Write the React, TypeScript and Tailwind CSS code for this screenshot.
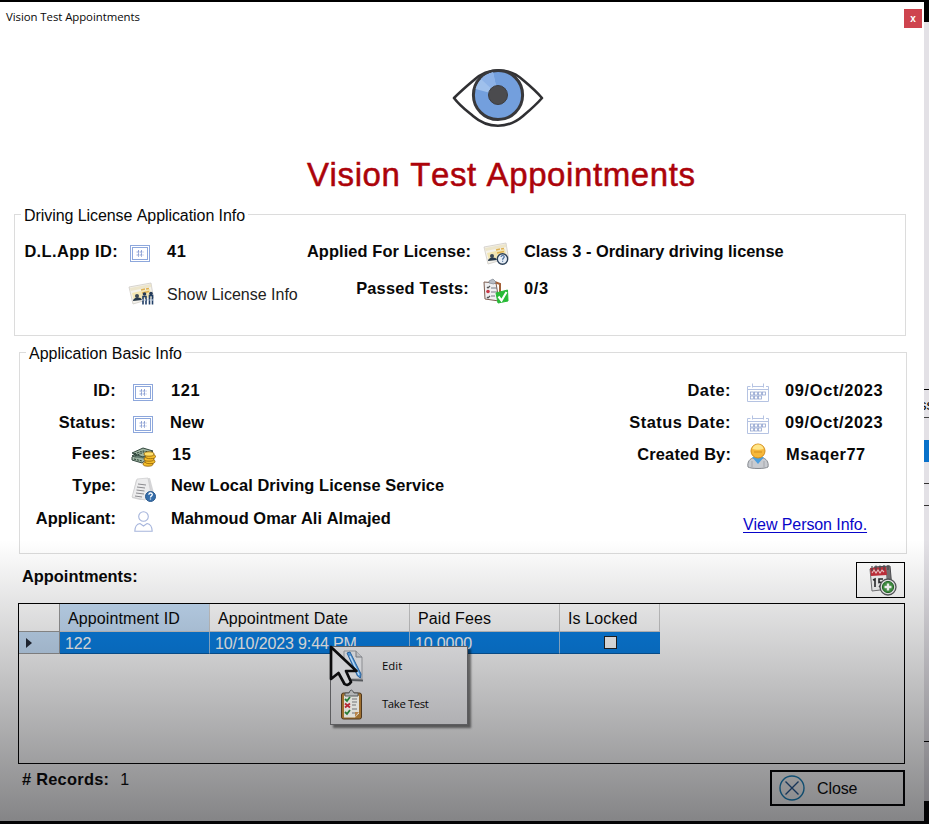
import type { ReactNode } from "react";

const strong = "text-[16.4px] leading-[18px] font-bold";

function EyeIcon() {
  return (
    <svg width="92" height="60" viewBox="0 0 92 60" fill="none">
      <path d="M2 30C10 22 16 17 22 12C36-1 57-1 71 12C77 17 84 23 90 30C84 37 78 42 71 48C56 61 36 61 21 48C15 43 8 38 2 30Z" stroke="#303033" strokeWidth="2.6" strokeLinejoin="round" fill="#fff" />
      <circle cx="46" cy="27" r="24.6" fill="#739fdd" stroke="#38383b" strokeWidth="3" />
      <path d="M46 27L23.5 21A23.3 23.3 0 0 1 41 4.3Z" fill="#9fc0ec" />
      <path d="M46 27L29 11A23.3 23.3 0 0 1 41 4.3Z" fill="#8db2e7" />
      <circle cx="46" cy="27" r="9.5" fill="#4b4b4e" stroke="#3c3c40" />
    </svg>
  );
}

function IdIcon() {
  return (
    <svg width="20" height="17" viewBox="0 0 20 17" fill="none" stroke="#8da7dc">
      <rect x="0.5" y="0.5" width="19" height="16" />
      <rect x="2.5" y="2.5" width="15" height="12" />
      <path d="M8.500 5v7M11.500 5v7M6.500 7h7M6.500 10h7" stroke="#7890cc" strokeWidth=".8" strokeDasharray="2.500 .6" />
    </svg>
  );
}

function LicenseIcon({ badge }: { badge: "people" | "question" }) {
  return (
    <svg width="27" height="24" viewBox="0 0 27 24" fill="none">
      <path d="M1 5L23 1L25.5 16L5 22Z" fill="#f4f2ec" stroke="#cfccc5" strokeWidth=".8" />
      <path d="M2 6L23 2L23.4 5L2.6 9Z" fill="#ece5cb" />
      <path d="M4 11L22 7L23.5 15L6 19Z" fill="#f3e6b4" />
      <path d="M13 8l4-1M18 7l3-.6M14 11l7-1.5" stroke="#dfb04e" strokeWidth="1.5" />
      <circle cx="9" cy="14" r="2" fill="#3d4a58" />
      <path d="M5 19c0-4 8-5 9-1Z" fill="#26384c" />
      {badge === "question" ? (
        <>
          <circle cx="19.5" cy="17" r="5.2" fill="#e6edf5" stroke="#2c4058" strokeWidth="1.4" />
          <path d="M18 15c.3-2 3.3-2 3.2 0c0 1-1.6 1-1.6 2.8m0 1v1" stroke="#486c9b" strokeWidth="1.2" />
        </>
      ) : (
        <>
          <path d="M15 22.5v-8h3v8m3.5 0v-9h3v9" stroke="#203e66" strokeWidth="1.6" />
          <circle cx="16.5" cy="12" r="1.8" fill="#243a58" />
          <circle cx="23" cy="11.5" r="1.8" fill="#243a58" />
          <path d="M14 18h12" stroke="#cfe0f2" strokeDasharray="1.5 1" />
        </>
      )}
    </svg>
  );
}

function TestsIcon() {
  return (
    <svg width="26" height="26" viewBox="0 0 26 26" fill="none">
      <path d="M1 4L13 5L16 23L2 21Z" fill="#efeff1" stroke="#7c5d50" />
      <path d="M9 3L17 6L17 14" stroke="#a36038" strokeWidth="2" />
      <path d="M6 3l4-2 3 3-2 2-5-1Z" fill="#b8bcc4" stroke="#808691" strokeWidth=".7" />
      <path d="M8 10h6M8 14h6M8 18h4" stroke="#777a83" />
      <path d="M4 9l1 1 2-2M4 19l1 1 2-2" stroke="#555" strokeWidth="1.2" />
      <circle cx="5" cy="13.5" r="1.8" fill="#c83a48" />
      <path d="M13 15L24.5 12L25 23L15 25Z" fill="#27ba36" stroke="#27ba36" strokeLinejoin="round" />
      <path d="M15.5 18.5l3 4 5-8.5" stroke="#fff" strokeWidth="2.1" />
    </svg>
  );
}

function MoneyIcon() {
  return (
    <svg width="25" height="20" viewBox="0 0 25 20" fill="none">
      <path d="M1 9L12 2L22 5L11 14Z" fill="#60796c" stroke="#293d33" />
      <path d="M1 6L12 1L22 4L12 10ZM1 10v3l10 3 5-4" fill="#9fb5a3" stroke="#34493f" />
      <path d="M3 7l9-3 6 1M4 9l9-4M3 12l8 2" stroke="#263d31" strokeDasharray="2 1" />
      <g fill="#f4bd29" stroke="#8d5d05" strokeWidth=".8">
        <ellipse cx="17" cy="17" rx="5" ry="2.2" />
        <ellipse cx="19" cy="14.5" rx="5" ry="2.2" />
        <ellipse cx="18" cy="12" rx="5" ry="2.2" />
        <ellipse cx="19.5" cy="9.5" rx="5" ry="2.2" />
        <ellipse cx="18" cy="7" rx="5" ry="2.2" fill="#ffe06b" />
      </g>
    </svg>
  );
}

function TypeIcon() {
  return (
    <svg width="25" height="25" viewBox="0 0 25 25" fill="none">
      <path d="M5 3L19 1L24 20L9 23L1 21Z" fill="#d5d5d7" />
      <path d="M6 2L17 1L20 17L14 23L1 20Z" fill="#ececed" stroke="#cacacc" strokeWidth=".7" />
      <path d="M7 7l8 1M6 10l8 1M5.5 13l8 1M5 16l8 1M4 19l7 1" stroke="#8b8b8f" />
      <circle cx="19.5" cy="19.5" r="5" fill="#366eaa" stroke="#2b598d" />
      <path d="M17.8 17.8c.2-2.5 3.6-2.2 3.5-.2 0 1.4-1.8 1.2-1.8 3m0 1v1" stroke="#fff" strokeWidth="1.3" />
    </svg>
  );
}

function PersonIcon() {
  return (
    <svg width="19" height="21" viewBox="0 0 19 21" fill="none" stroke="#a6b5dc" strokeWidth="1.1">
      <circle cx="9.5" cy="5.5" r="4.8" />
      <path d="M.8 20.2C1 15 2.5 13 6 12.5L9.5 15L13 12.5C16.5 13 18 15 18.2 20.2Z" />
    </svg>
  );
}

function CalendarIcon() {
  return (
    <svg width="22" height="19" viewBox="0 0 22 19" fill="none" stroke="#b5c3e2">
      <path d="M.5 3.5h3M6 3.5h10M19 3.5h2.5v15H.5v-15M.5 6.5h21M5.5 .5v4M16.5 .5v4" />
      <g stroke="#93a5d0" strokeWidth=".8">
        <rect x="3.5" y="9" width="3" height="3" />
        <rect x="7.5" y="9" width="3" height="3" />
        <rect x="11.5" y="9" width="3" height="3" />
        <rect x="15.5" y="9" width="3" height="3" />
        <rect x="3.5" y="13" width="3" height="3" />
        <rect x="7.5" y="13" width="3" height="3" />
        <rect x="11.5" y="13" width="3" height="3" />
      </g>
    </svg>
  );
}

function UserIcon() {
  return (
    <svg width="22" height="26" viewBox="0 0 22 26" fill="none">
      <path d="M1 24c-1-5 2-9 6-9h8c4 0 7 4 6 9-3 2-17 2-20 0Z" fill="#c8cbd0" stroke="#85898f" />
      <path d="M5 14l6 7 6-7Z" fill="#4c9fdf" />
      <path d="M5 18v6M17 18v6" stroke="#a4a7ad" />
      <circle cx="11" cy="8" r="7" fill="#f7b83b" stroke="#d38e1c" />
      <path d="M5.5 6C6 0 16 0 16.5 6c-3 1-8 1-11 0Z" fill="#ffe68a" />
      <path d="M7 9h8" stroke="#d38f1d" />
    </svg>
  );
}

function AddAppointmentIcon() {
  return (
    <svg width="30" height="32" viewBox="0 0 30 32" fill="none">
      <path d="M6 3L22 2L24 24L8 26Z" fill="#777" stroke="#505054" />
      <path d="M2 5L18 4L20 25L4 27Z" fill="#f4f4f4" stroke="#77777a" />
      <path d="M2 4L18 3L19 11L3 12Z" fill="#c5303c" />
      <path d="M4 9l2-3 2 3 2-3 2 3 2-3 2 2" stroke="#f0c8ca" strokeWidth="1.1" />
      <path d="M4 2v5M8 1.5v5M12 1.5v5M16 1v5M20 1v5" stroke="#4b4b50" strokeWidth="1.2" />
      <path d="M5 16l2-1v8M15 15h-4v3.5q5-1 4 2.5-1 3-4 1" stroke="#29292b" strokeWidth="1.6" />
      <circle cx="20" cy="23" r="8" fill="#eee" stroke="#55585a" strokeWidth="1.3" />
      <circle cx="20" cy="23" r="5.6" fill="#449744" stroke="#256e2a" />
      <path d="M20 19.5v7M16.5 23h7" stroke="#fff" strokeWidth="2.4" />
    </svg>
  );
}

function EditIcon() {
  return (
    <svg width="28" height="32" viewBox="0 0 28 32" fill="none">
      <path d="M6 1h12l6 6v22H6Z" fill="#cfd0d3" stroke="#8b8d91" />
      <path d="M18 1v6h6" fill="#bbbdc1" stroke="#77797e" />
      <path d="M9 3l3-1 11 22-.5 4-3-2Z" fill="#4f97da" stroke="#285f98" />
      <path d="M12 6l9 19" stroke="#c0daf0" strokeWidth="1.3" />
      <path d="M12 30l13 .5" stroke="#55585c" strokeWidth="2" />
    </svg>
  );
}

function ClipboardIcon() {
  return (
    <svg width="23" height="31" viewBox="0 0 23 31" fill="none">
      <rect x="1.5" y="4" width="20" height="26" rx="2" fill="#a0702f" stroke="#4e3820" />
      <path d="M4 6.5h15v18l-4 4H4Z" fill="#deded9" />
      <path d="M19 23l-4 5v-5Z" fill="#b9854b" />
      <path d="M5 7V4h4q2-6 5 0h4v3Z" fill="#b2b4b5" stroke="#55585a" />
      <path d="M12 10h5M12 13h5M12 16h4M12 20h5M12 24h3" stroke="#707377" />
      <path d="M5 10l2 2 3-4M5 23l2 2 3-4" stroke="#277b35" strokeWidth="1.8" />
      <path d="M5 14.5l5 4M10 14.5l-5 4" stroke="#b72835" strokeWidth="1.8" />
    </svg>
  );
}

function Cursor() {
  return (
    <svg width="35" height="43" viewBox="0 0 35 43" fill="none">
      <path d="M2 2V34L9.5 28L15.5 39Q19 41.5 22 37L17 26H27.5Z" fill="#cfd0d3" stroke="#0c0c0e" strokeWidth="2.7" strokeLinejoin="round" />
    </svg>
  );
}

interface FieldProps {
  label: string;
  icon: ReactNode;
  value: string;
  row: string;
  labelClass: string;
  iconClass?: string;
  valueClass?: string;
}

function Field({ label, icon, value, row, labelClass, iconClass = "mt-[3px] ml-[12px]", valueClass = "ml-[13px]" }: FieldProps) {
  return (
    <div className={`flex items-start ${row}`}>
      <span className={`${strong} shrink-0 text-right ${labelClass}`}>{label}</span>
      <span className={`${iconClass} flex h-[16px] w-[30px] shrink-0 items-center justify-center`}>{icon}</span>
      <span className={`${strong} ${valueClass}`}>{value}</span>
    </div>
  );
}

function Legend({ children, className }: { children: string; className: string }) {
  return <h2 className={`-mt-[10px] h-[20px] w-fit bg-white leading-[22px] ${className}`}>{children}</h2>;
}

function BackgroundWindow() {
  return (
    <div className="mt-[22px] flex h-[779px] w-[5px] flex-col overflow-hidden bg-[#e3e1e6]">
      <div className="h-[368px] border-b border-black" />
      <div className="h-[28px] overflow-hidden border-b border-[#444] text-[15px] leading-[30px]">
        <span className="-ml-[5px]">ss</span>
      </div>
      <div className="mt-[22px] h-[22px] bg-[#0871ca]" />
      <div className="h-[22px] border-b border-[#333]" />
      <div className="h-[22px] border-b border-[#333]" />
      <div className="h-[236px] border-b border-black" />
    </div>
  );
}

const headerCell = "h-[28px] border-r border-b border-[#ccc] pt-px pl-[8px] leading-[28px] tracking-[0.12px]";
const dataCell = "h-[22px] border-r border-b border-[#9bc2e3] border-b-[#085ba4] bg-[#0880e5] pl-[5px] leading-[24px] tracking-[-0.13px] text-white";

export default function App() {
  return (
    <div className="relative flex h-[824px] w-[929px] overflow-hidden bg-black font-['Liberation_Sans',Arial,sans-serif] text-[16px] leading-[20px] text-[#080808] [font-kerning:none]">
      <main className="mt-[2px] flex h-[819px] w-[924px] flex-col overflow-hidden bg-white">
        <header className="flex h-[66px] items-start justify-between pr-[2px] pl-[6px]">
          <span className="mt-[5px] font-['Open_Sans','Noto_Sans',sans-serif] text-[11.4px] tracking-[-0.06px]">Vision Test Appointments</span>
          <button className="mt-[7px] h-[19px] w-[18px] bg-[#ce444e] text-[10px] leading-[16px] font-bold text-white">x</button>
        </header>
        <div className="flex h-[60px] pl-[452px]"><EyeIcon /></div>
        <h1 className="mt-[26px] ml-[307px] h-[42px] text-[33px] leading-[42px] tracking-[0.6px] text-[#ac030a] [-webkit-text-stroke:0.5px_currentColor]">Vision Test Appointments</h1>

        <section className="mt-[18px] ml-[14px] h-[122px] w-[892px] border border-[#dcdcdc]">
          <Legend className="ml-[6px] px-[3px] tracking-[-0.07px]">Driving License Application Info</Legend>
          <div className="mt-[17px] flex">
            <div className="w-[286px]">
              <Field label="D.L.App ID:" icon={<IdIcon />} value="41" row="h-[41px]" labelClass="w-[103px] tracking-[0.4px]" iconClass="mt-[3px] ml-[7px]" valueClass="ml-[12px] tracking-[0.7px]" />
              <div className="flex items-start">
                <span className="-mt-px ml-[113px]"><LicenseIcon badge="people" /></span>
                <span className="mt-[2px] ml-[12px] text-[#222]">Show License Info</span>
              </div>
            </div>
            <div>
              <Field label="Applied For License:" icon={<LicenseIcon badge="question" />} value="Class 3 - Ordinary driving license" row="h-[37px]" labelClass="w-[170px] tracking-[0.1px]" iconClass="mt-[4px] ml-[10px]" />
              <Field label="Passed Tests:" icon={<TestsIcon />} value="0/3" row="h-[37px]" labelClass="w-[168px] tracking-[0.2px]" iconClass="mt-[4px] ml-[12px]" valueClass="ml-[13px] tracking-[0.7px]" />
            </div>
          </div>
        </section>

        <section className="mt-[16px] ml-[19px] h-[202px] w-[888px] border border-[#dcdcdc]">
          <Legend className="ml-[6px] px-[3px]">Application Basic Info</Legend>
          <div className="mt-[18px] flex">
            <div className="w-[600px]">
              <Field label="ID:" icon={<IdIcon />} value="121" row="h-[32px]" labelClass="w-[96px] tracking-[0.3px]" valueClass="ml-[13px] tracking-[0.6px]" />
              <Field label="Status:" icon={<IdIcon />} value="New" row="h-[31px]" labelClass="w-[96px] tracking-[0.25px]" valueClass="ml-[12px] tracking-[0.2px]" />
              <Field label="Fees:" icon={<MoneyIcon />} value="15" row="h-[32px]" labelClass="w-[96px] tracking-[0.3px]" iconClass="mt-[5px] ml-[12px]" valueClass="ml-[14px] pt-px tracking-[0.6px]" />
              <Field label="Type:" icon={<TypeIcon />} value="New Local Driving License Service" row="h-[33px]" labelClass="w-[96px]" iconClass="mt-[5px] ml-[12px]" valueClass="ml-[13px] tracking-[0.08px]" />
              <Field label="Applicant:" icon={<PersonIcon />} value="Mahmoud Omar Ali Almajed" row="h-[33px]" labelClass="w-[96px]" iconClass="mt-[4px] ml-[12px]" valueClass="ml-[13px] tracking-[0.05px]" />
            </div>
            <div className="flex flex-col">
              <Field label="Date:" icon={<CalendarIcon />} value="09/Oct/2023" row="h-[32px]" labelClass="w-[111px] tracking-[0.5px]" valueClass="ml-[12px] tracking-[0.65px]" />
              <Field label="Status Date:" icon={<CalendarIcon />} value="09/Oct/2023" row="h-[32px]" labelClass="w-[111px] tracking-[0.5px]" valueClass="ml-[12px] tracking-[0.65px]" />
              <Field label="Created By:" icon={<UserIcon />} value="Msaqer77" row="h-[32px]" labelClass="w-[111px] tracking-[0.15px]" valueClass="ml-[13px] tracking-[0.5px]" />
              <a className="mt-[38px] ml-[123px] tracking-[-0.08px] text-[#0805c9] underline underline-offset-2">View Person Info.</a>
            </div>
          </div>
        </section>

        <div className="mt-[8px] ml-[18px] flex h-[36px] w-[887px] items-start justify-between">
          <h2 className={`mt-[5px] ml-[4px] ${strong}`}>Appointments:</h2>
          <button className="flex h-[36px] w-[49px] items-center justify-center border border-black pl-[5px]"><AddAppointmentIcon /></button>
        </div>

        <div className="mt-[5px] ml-[18px] h-[161px] w-[887px] shrink-0 border border-black">
          <div className="grid w-[641px] grid-cols-[41px_150px_200px_150px_100px]">
            <div className="h-[28px] border-r border-b border-[#999]" />
            <div className={`${headerCell} bg-[#c5def7]`}>Appointment ID</div>
            <div className={headerCell}>Appointment Date</div>
            <div className={headerCell}>Paid Fees</div>
            <div className={headerCell}>Is Locked</div>
            <div className="flex h-[22px] items-center border-r border-b border-[#999] bg-[#c5def7] pl-[7px]">
              <svg width="6" height="10" viewBox="0 0 6 10"><path d="M0 0L6 5L0 10Z" fill="#222936" /></svg>
            </div>
            <div className={dataCell}>122</div>
            <div className={dataCell}>10/10/2023 9:44 PM</div>
            <div className={dataCell}>10.0000</div>
            <div className="flex items-center justify-center border-b border-[#085ba4] bg-[#0880e5]">
              <span className="h-[13px] w-[13px] border border-[#222] bg-white" />
            </div>
          </div>
        </div>

        <footer className="ml-[22px] flex w-[883px] items-start justify-between">
          <div className="mt-[6px] flex items-baseline">
            <span className={`${strong} tracking-[0.25px]`}># Records:</span>
            <span className="ml-[11px]">1</span>
          </div>
          <button className="mt-[6px] flex h-[36px] w-[135px] items-center border-2 border-black pl-[7px]">
            <svg width="26" height="26" viewBox="0 0 26 26" fill="none" strokeWidth="1.4">
              <circle cx="13" cy="13" r="12" stroke="#1682bd" />
              <path d="M6.5 6.5l13 13M19.5 6.5l-13 13" stroke="#235792" />
            </svg>
            <span className="mt-[2px] ml-[12px] tracking-[-0.1px]">Close</span>
          </button>
        </footer>
      </main>
      <BackgroundWindow />
      <div className="pointer-events-none absolute inset-x-0 top-[540px] h-[284px] bg-linear-to-b from-[#08080c]/0 to-[#08080c]/50" />
      <div className="absolute top-[646px] left-[330px] flex h-[79px] w-[138px] flex-col border border-[#5d5d60] bg-linear-to-b from-[#d0d0d2] to-[#b0b0b3] font-['Open_Sans','Noto_Sans',sans-serif] text-[11.4px] tracking-[-0.4px] shadow-[3px_3px_2px_rgba(0,0,0,0.5)]">
        <div className="flex h-[38px] items-center">
          <span className="ml-[7px] w-[44px]"><EditIcon /></span><span className="tracking-normal">Edit</span>
        </div>
        <div className="flex h-[38px] items-center">
          <span className="ml-[9px] w-[42px]"><ClipboardIcon /></span>Take Test
        </div>
      </div>
      <div className="pointer-events-none absolute top-[645px] left-[329px]"><Cursor /></div>
    </div>
  );
}
